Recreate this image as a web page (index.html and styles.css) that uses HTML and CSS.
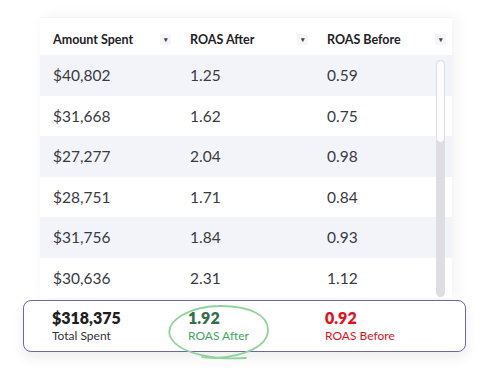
FILE: index.html
```html
<!DOCTYPE html>
<html>
<head>
<meta charset="utf-8">
<link rel="stylesheet" href="styles.css">
</head>
<body>
<div class="page">
  <div class="card">
    <div class="row head">
      <div class="cell"><span>Amount Spent</span><span class="caret">▾</span></div>
      <div class="cell"><span>ROAS After</span><span class="caret">▾</span></div>
      <div class="cell"><span>ROAS Before</span><span class="caret">▾</span></div>
    </div>
    <div class="body">
      <div class="row alt"><div class="cell">$40,802</div><div class="cell">1.25</div><div class="cell">0.59</div></div>
      <div class="row"><div class="cell">$31,668</div><div class="cell">1.62</div><div class="cell">0.75</div></div>
      <div class="row alt"><div class="cell">$27,277</div><div class="cell">2.04</div><div class="cell">0.98</div></div>
      <div class="row"><div class="cell">$28,751</div><div class="cell">1.71</div><div class="cell">0.84</div></div>
      <div class="row alt"><div class="cell">$31,756</div><div class="cell">1.84</div><div class="cell">0.93</div></div>
      <div class="row"><div class="cell">$30,636</div><div class="cell">2.31</div><div class="cell">1.12</div></div>
      <div class="scrollbar"><div class="thumb"></div></div>
    </div>
  </div>
  <div class="summary">
    <div class="stat">
      <div class="num">$318,375</div>
      <div class="lbl">Total Spent</div>
    </div>
    <div class="stat after">
      <div class="num">1.92</div>
      <div class="lbl">ROAS After</div>
      <svg class="circle" width="106" height="58" viewBox="0 0 106 58">
        <path d="M80 55 C52 57 12 52 4 33 C-1 17 25 3 55 3 C83 3 103 12 102 28 C101 43 80 53 50 55 C44 55 40 55 36 54" fill="none" stroke="#8fd49a" stroke-width="1.8" stroke-linecap="round"/>
      </svg>
    </div>
    <div class="stat before">
      <div class="num">0.92</div>
      <div class="lbl">ROAS Before</div>
    </div>
  </div>
</div>
</body>
</html>
```
FILE: styles.css
```css
* { box-sizing: border-box; }
html, body { margin: 0; padding: 0; background: #ffffff; }
body { font-family: "Lato", "Open Sans", sans-serif; color: #333338; }
.page { width: 490px; height: 382px; padding-top: 17px; overflow: hidden; }
.card {
  margin-left: 40px;
  width: 412px;
  background: #ffffff;
  box-shadow: 4px 0 14px rgba(40, 40, 70, 0.06);
  border-top: 1px solid #f4f4f7;
}
.row { display: grid; grid-template-columns: 137px 137px 138px; height: 40.5px; align-items: center; }
.row.head { height: 37px; align-items: end; padding-bottom: 8px; }
.row.alt { background: #f3f4f9; }
.cell { padding-left: 13px; font-size: 15.5px; color: #3a3a3f; display: flex; align-items: center; }
.head .cell { font-size: 12.5px; font-weight: 700; color: #222226; justify-content: space-between; padding-right: 6px; }
.caret {
  font-size: 7px; color: #444; width: 11px; height: 11px; display: flex; align-items: center; justify-content: center;
  background: #f6f6f8; border-radius: 2px;
}
.body { position: relative; }
.scrollbar {
  position: absolute; right: 7px; top: 5px; width: 9px; height: 237px;
  background: #dedee2; border-radius: 5px;
}
.thumb {
  height: 83px; background: #fcfcfd; border: 1px solid #dcdce2; border-radius: 5px;
}
.summary {
  margin-top: 2px;
  margin-left: 23px;
  width: 443px;
  height: 52px;
  border: 1px solid #6e67a6;
  border-radius: 8px;
  background: #ffffff;
  box-shadow: 0 6px 12px rgba(40, 40, 80, 0.08);
  display: grid;
  grid-template-columns: 136px 137px 1fr;
  padding-left: 28px;
  align-items: center;
}
.stat { position: relative; }
.num { font-size: 16px; font-weight: 800; color: #1e1e22; line-height: 19px; }
.lbl { font-size: 12px; color: #333338; line-height: 16px; margin-top: 1px; }
.after .num { color: #2f7048; }
.after .lbl { color: #45a461; }
.before .num { color: #e4101c; }
.before .lbl { color: #e4101c; }
.circle { position: absolute; left: -22px; top: -5px; }
```
